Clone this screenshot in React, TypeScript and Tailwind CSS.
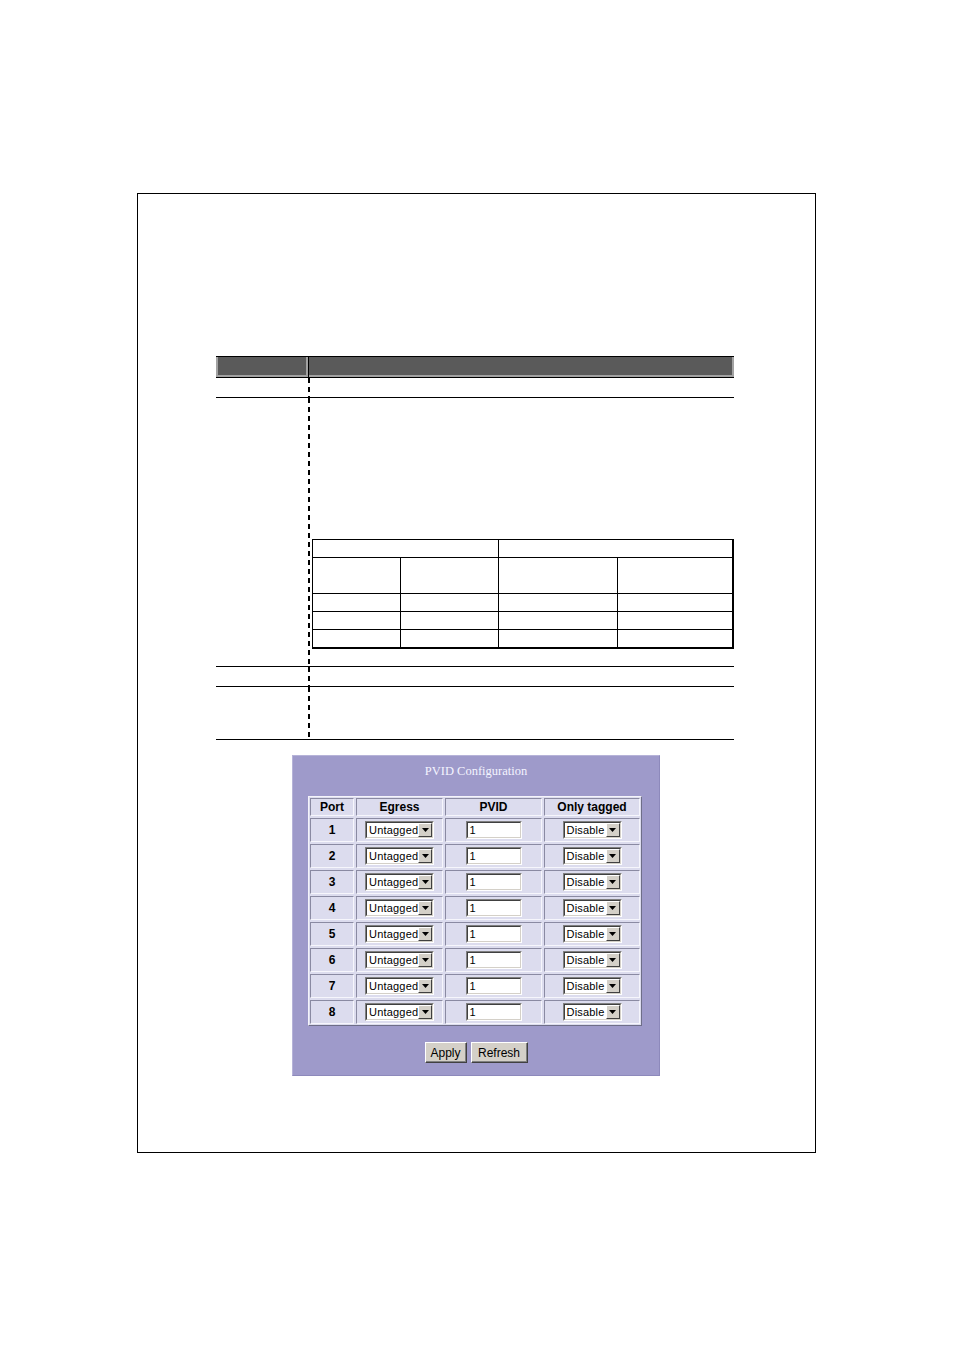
const sans = "font-['Liberation_Sans',Arial,sans-serif]";

const ports = [1, 2, 3, 4, 5, 6, 7, 8];

function Arrow() {
  return (
    <div className="flex h-[14px] w-[14px] shrink-0 items-center justify-center border border-t-white border-l-white border-r-[#404040] border-b-[#404040] bg-[#d4d0c8]">
      <svg width="7" height="4" viewBox="0 0 7 4">
        <path d="M0 0H7L3.5 4Z" fill="#000" />
      </svg>
    </div>
  );
}

function Select({ value, wide }: { value: string; wide?: boolean }) {
  return (
    <div
      className={`flex h-[18px] border border-t-[#808080] border-l-[#808080] border-r-white border-b-white ${
        wide ? 'w-[69px]' : 'w-[59px]'
      }`}
    >
      <div className="flex flex-1 items-center border border-t-[#404040] border-l-[#404040] border-r-[#d4d0c8] border-b-[#d4d0c8] bg-white">
        <span className="flex-1 pl-[2px] text-[11px] leading-none tracking-[0.2px] text-black">{value}</span>
        <Arrow />
      </div>
    </div>
  );
}

function TextBox({ value }: { value: string }) {
  return (
    <div className="flex h-[18px] w-[56px] border border-t-[#808080] border-l-[#808080] border-r-white border-b-white">
      <div className="flex flex-1 items-center border border-t-[#404040] border-l-[#404040] border-r-[#d4d0c8] border-b-[#d4d0c8] bg-white">
        <span className="pl-[2px] text-[11px] leading-none text-black">{value}</span>
      </div>
    </div>
  );
}

function Cell({ children, head }: { children: React.ReactNode; head?: boolean }) {
  return (
    <div
      className={`flex items-center justify-center border border-t-[#8a8aa2] border-l-[#8a8aa2] border-r-[#f6f6fc] border-b-[#f6f6fc] bg-[#dcdcee] ${
        head ? 'h-[18px]' : 'h-[24px]'
      }`}
    >
      {children}
    </div>
  );
}

function Button({ label, wide }: { label: string; wide?: boolean }) {
  return (
    <button
      className={`flex h-[21px] items-center justify-center border border-t-white border-l-white border-r-[#404040] border-b-[#404040] bg-[#d4d0c8] text-[12px] leading-none text-black shadow-[inset_-1px_-1px_0_#808080] ${
        wide ? 'w-[57px]' : 'w-[42px]'
      }`}
    >
      {label}
    </button>
  );
}

function PvidPanel() {
  return (
    <div className={`ml-[76px] mt-[15px] h-[321px] w-[368px] border border-t-[#b6b3d8] border-l-[#b6b3d8] border-r-[#8d89bb] border-b-[#8d89bb] bg-[#9e9aca] ${sans}`}>
      <div className="pt-[8px] text-center font-['Liberation_Serif',serif] text-[12.5px] leading-[14px] text-[#f4f4ff]">
        PVID Configuration
      </div>
      <div className="ml-[15px] mt-[18px] grid w-[334px] grid-cols-[44px_87px_97px_96px] gap-[2px] border border-t-[#f4f4fa] border-l-[#f4f4fa] border-r-[#6e6e88] border-b-[#6e6e88] bg-[#dcdcee] p-[1px]">
        {['Port', 'Egress', 'PVID', 'Only tagged'].map(h => (
          <Cell key={h} head>
            <span className="text-[12px] font-bold leading-none text-black">{h}</span>
          </Cell>
        ))}
        {ports.map(p => (
          <div key={p} className="contents">
            <Cell>
              <span className="text-[12px] font-bold leading-none text-black">{p}</span>
            </Cell>
            <Cell>
              <Select value="Untagged" wide />
            </Cell>
            <Cell>
              <TextBox value="1" />
            </Cell>
            <Cell>
              <Select value="Disable" />
            </Cell>
          </div>
        ))}
      </div>
      <div className="mt-[16px] flex justify-center gap-[4px]">
        <Button label="Apply" />
        <Button label="Refresh" wide />
      </div>
    </div>
  );
}

const dashes =
  'bg-[repeating-linear-gradient(to_bottom,#000_0px,#000_5px,transparent_5px,transparent_9px)]';

function DocRow({ h, children }: { h: string; children?: React.ReactNode }) {
  return (
    <div className={`flex border-b border-black ${h}`}>
      <div className="w-[92px] shrink-0" />
      <div className={`w-[2px] shrink-0 ${dashes}`} />
      <div className="flex-1">{children}</div>
    </div>
  );
}

function InnerTable() {
  const row = (h: string, last?: boolean) => (
    <div className={`flex ${h} ${last ? '' : 'border-b border-black'}`}>
      <div className="w-[88px] border-r border-black" />
      <div className="w-[98px] border-r border-black" />
      <div className="w-[119px] border-r border-black" />
      <div className="flex-1" />
    </div>
  );
  return (
    <div className="ml-[2px] mt-[141px] w-[422px] border-t border-l border-r-2 border-b-2 border-black">
      <div className="flex h-[18px] border-b border-black">
        <div className="w-[186px] border-r border-black" />
        <div className="flex-1" />
      </div>
      {row('h-[36px]')}
      {row('h-[18px]')}
      {row('h-[18px]')}
      {row('h-[17px]', true)}
    </div>
  );
}

export default function App() {
  return (
    <div className="h-[1348px] w-[954px] bg-white pl-[137px] pt-[193px]">
      <div className="h-[960px] w-[679px] border border-black pl-[78px] pt-[162px]">
        <div className="w-[518px]">
          <div className="border-t border-b border-black">
            <div className="flex h-[20px] bg-[#5a5a5a]">
              <div className="w-[92px] shrink-0 border-l-2 border-r-2 border-b-2 border-[#a2a2a2]" />
              <div className="w-[1px] bg-black" />
              <div className="flex-1 border-r-2 border-b-2 border-[#a2a2a2]" />
            </div>
          </div>
          <DocRow h="h-[20px]" />
          <DocRow h="h-[269px]">
            <InnerTable />
          </DocRow>
          <DocRow h="h-[20px]" />
          <DocRow h="h-[53px]" />
        </div>
        <PvidPanel />
      </div>
    </div>
  );
}
